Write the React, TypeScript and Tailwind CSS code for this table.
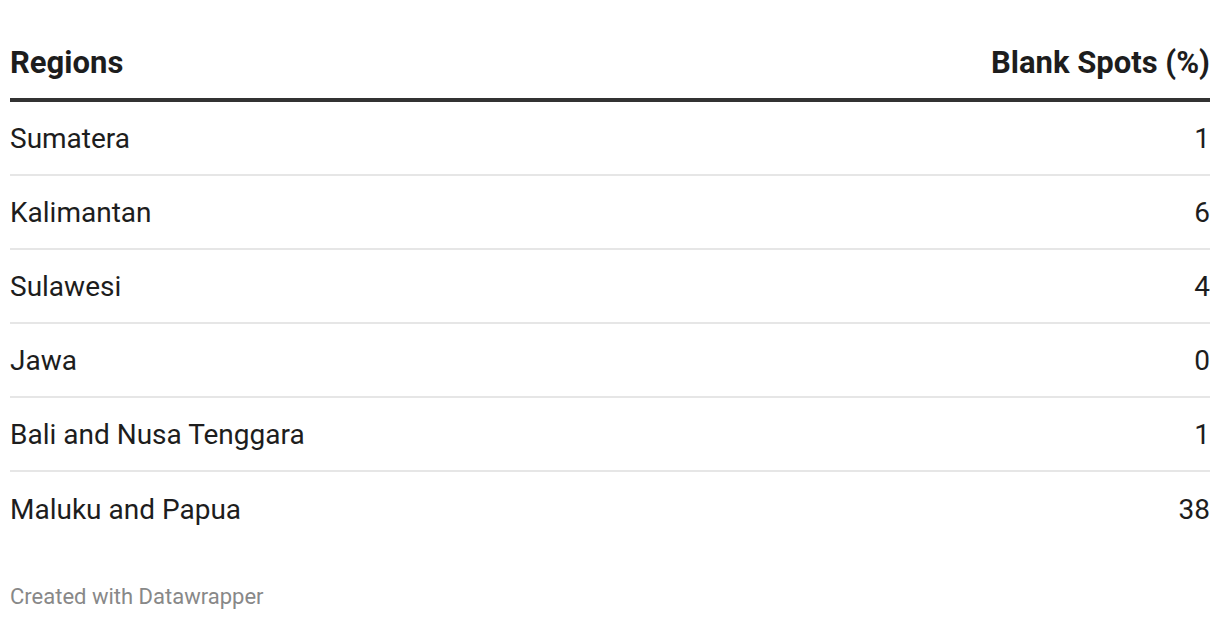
const ROWS = [
  { region: 'Sumatera', value: '1' },
  { region: 'Kalimantan', value: '6' },
  { region: 'Sulawesi', value: '4' },
  { region: 'Jawa', value: '0' },
  { region: 'Bali and Nusa Tenggara', value: '1' },
  { region: 'Maluku and Papua', value: '38' },
];

export default function App() {
  return (
    <div
      className="w-[1220px] h-[620px] bg-white px-[10px] text-[#1d1d1d]"
      style={{ fontFamily: 'Roboto, "Liberation Sans", sans-serif' }}
    >
      {/* header */}
      <div className="flex justify-between pt-[45px] pb-[17px] border-b-4 border-[#333333] text-[31px] leading-[36px] font-bold">
        <span>Regions</span>
        <span>Blank Spots (%)</span>
      </div>

      {/* rows */}
      <div className="flex flex-col">
        {ROWS.map((r, i) => (
          <div
            key={r.region}
            className={`flex h-[74px] pt-[1px] items-center justify-between text-[28px] leading-[34px] ${
              i < ROWS.length - 1 ? 'border-b-2 border-[#e6e6e6]' : ''
            }`}
          >
            <span>{r.region}</span>
            <span>{r.value}</span>
          </div>
        ))}
      </div>

      {/* footer */}
      <div className="mt-[38px] text-[22px] leading-[26px] text-[#888888]">Created with Datawrapper</div>
    </div>
  );
}
